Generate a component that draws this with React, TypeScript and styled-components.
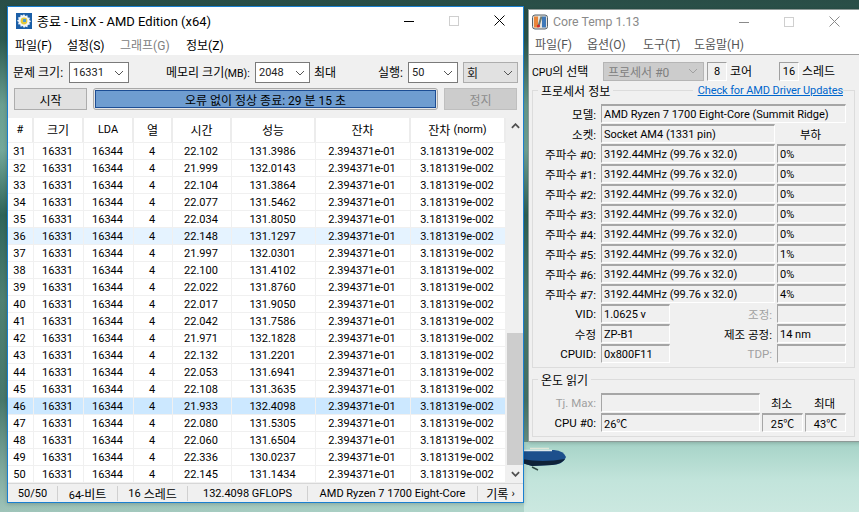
import styled, { createGlobalStyle } from "styled-components";

const GlobalStyle = createGlobalStyle`
  * { box-sizing: border-box; }
  html, body { margin: 0; padding: 0; height: 100%; overflow: hidden; }
  body {
    font-family: Roboto, "Noto Sans CJK KR", sans-serif;
    font-size: 11px;
    color: #000;
  }
`;

const Desktop = styled.div`
  position: relative;
  width: 859px;
  height: 512px;
  overflow: hidden;
  background:
    linear-gradient(180deg, #a6d3c7 0%, #c2e4db 55%, #cbe8e0 100%) 524px 442px / 335px 70px no-repeat,
    linear-gradient(90deg, rgba(150, 195, 183, 0) 0%, rgba(176, 214, 203, 0.9) 100%) 0 503px / 524px 9px no-repeat,
    linear-gradient(
      180deg,
      #294e47 0px,
      #2c5a50 40px,
      #6a9f90 105px,
      #74a899 150px,
      #2f6458 215px,
      #4f8072 300px,
      #47776a 400px,
      #7fa99d 470px,
      #9fc4b9 512px
    );
`;

const Boat = styled.svg`
  position: absolute;
  left: 522px;
  top: 444px;
`;

const Window = styled.div<{ $x: number; $y: number; $w: number; $h: number; $border: string }>`
  position: absolute;
  left: ${(p) => p.$x}px;
  top: ${(p) => p.$y}px;
  width: ${(p) => p.$w}px;
  height: ${(p) => p.$h}px;
  border: 1px solid ${(p) => p.$border};
  background: #f0f0f0;
  display: flex;
  flex-direction: column;
  box-shadow: 0 1px 4px rgba(0, 0, 0, 0.2);
`;

const TitleBar = styled.div<{ $h: number; $pad: number; $size: number; $dim?: boolean }>`
  height: ${(p) => p.$h}px;
  background: #fff;
  display: flex;
  align-items: center;
  padding-left: ${(p) => p.$pad}px;
  gap: 5px;
  font-size: ${(p) => p.$size}px;
  color: ${(p) => (p.$dim ? "#8a8a8a" : "#000")};
`;

const TitleText = styled.span`
  flex: 1;
  white-space: nowrap;
`;

const Controls = styled.div<{ $color: string; $right: number }>`
  display: flex;
  align-items: center;
  gap: 35px;
  margin-right: ${(p) => p.$right}px;
  color: ${(p) => p.$color};
  svg { display: block; }
`;

const MenuBar = styled.div<{ $h: number; $pad: number; $line?: boolean }>`
  height: ${(p) => p.$h}px;
  background: #fff;
  display: flex;
  align-items: center;
  padding-left: ${(p) => p.$pad}px;
  font-size: 12px;
  color: ${(p) => (p.$line ? "#555" : "#000")};
  border-bottom: ${(p) => (p.$line ? "1px solid #a0a0a0" : "none")};
`;

const MenuItem = styled.span<{ $w: number; $off?: boolean }>`
  width: ${(p) => p.$w}px;
  white-space: nowrap;
  color: ${(p) => (p.$off ? "#808080" : "inherit")};
`;

const ToolRow = styled.div`
  height: 21px;
  margin-top: 7px;
  display: flex;
  align-items: center;
  padding-left: 5px;
`;

const ToolLabel = styled.span<{ $w: number; $ml?: number }>`
  width: ${(p) => p.$w}px;
  margin-left: ${(p) => p.$ml ?? 0}px;
  padding-bottom: 2px;
  white-space: nowrap;
  font-size: 12px;
`;

const SmallLatin = styled.span`
  font-size: 10.5px;
`;

const Select = styled.div<{ $w: number; $ml?: number; $off?: boolean }>`
  width: ${(p) => p.$w}px;
  height: 21px;
  margin-left: ${(p) => p.$ml ?? 0}px;
  flex: none;
  display: flex;
  align-items: center;
  justify-content: space-between;
  padding: 0 4px 0 3px;
  font-size: 11px;
  background: ${(p) => (p.$off ? "#e1e1e1" : "#fff")};
  border: 1px solid ${(p) => (p.$off ? "#adadad" : "#7a7a7a")};
  color: #222;
`;

const ActionRow = styled.div`
  height: 22px;
  margin-top: 5px;
  display: flex;
  padding-left: 6px;
  gap: 6px;
`;

const ActionButton = styled.div<{ $off?: boolean }>`
  width: 73px;
  display: flex;
  align-items: center;
  justify-content: center;
  font-size: 12px;
  background: ${(p) => (p.$off ? "#cccccc" : "#e1e1e1")};
  border: 1px solid ${(p) => (p.$off ? "#bfbfbf" : "#adadad")};
  color: ${(p) => (p.$off ? "#8c8c8c" : "#000")};
`;

const ProgressOuter = styled.div`
  width: 345px;
  padding: 1px;
  border: 1px solid #a8a8a8;
  border-radius: 3px;
  background: #e6e6e6;
  display: flex;
`;

const ProgressBar = styled.div`
  flex: 1;
  display: flex;
  align-items: center;
  justify-content: center;
  font-size: 12px;
  background: #6f9dd0;
  border: 1px solid #1c4d94;
`;

const TableArea = styled.div`
  height: 365px;
  margin-top: 8px;
  display: flex;
`;

const Table = styled.div`
  width: 498px;
  background: #fff;
`;

const Columns = "26px 50px 50px 39px 59px 84px 95px 95px";

const HeaderRow = styled.div`
  display: grid;
  grid-template-columns: ${Columns};
  height: 25px;
  border-bottom: 1px solid #f0f0f0;
`;

const HeaderCell = styled.div`
  display: flex;
  align-items: center;
  justify-content: center;
  gap: 3px;
  font-size: 11px;
  border-right: 2px solid #ececec;
  padding-bottom: 1px;
`;

const DataRow = styled.div<{ $tint?: string }>`
  display: grid;
  grid-template-columns: ${Columns};
  height: 17px;
  background: ${(p) => p.$tint ?? "#fff"};
  border-bottom: 1px solid #f0f0f0;
`;

const DataCell = styled.div`
  display: flex;
  align-items: center;
  justify-content: center;
  padding-right: 2px;
  font-size: 11px;
  border-right: 1px solid #f0f0f0;
`;

const Ko = styled.span`
  font-size: 12px;
`;

const ScrollBar = styled.div`
  width: 16px;
  margin-left: 1px;
  background: #f0f0f0;
  display: flex;
  flex-direction: column;
  align-items: center;
  justify-content: space-between;
  padding: 5px 0 6px;
`;

const ScrollThumbWrap = styled.div`
  flex: 1;
  width: 100%;
  display: flex;
  flex-direction: column;
  justify-content: flex-end;
  padding: 0 0 6px;
`;

const ScrollThumb = styled.div`
  height: 132px;
  background: #cdcdcd;
`;

const StatusBar = styled.div`
  height: 19px;
  border-top: 1px solid #d7d7d7;
  display: flex;
  align-items: center;
`;

const StatusCell = styled.div<{ $w: number; $last?: boolean }>`
  width: ${(p) => p.$w}px;
  height: 15px;
  display: flex;
  align-items: center;
  justify-content: center;
  gap: 3px;
  font-size: 11px;
  white-space: nowrap;
  border-right: ${(p) => (p.$last ? "none" : "1px solid #d0d0d0")};
`;

const CoreBody = styled.div`
  flex: 1;
  padding: 6px 0 0 3px;
`;

const CpuRow = styled.div`
  height: 20px;
  display: flex;
  align-items: center;
  font-size: 12px;
`;

const CpuText = styled.span<{ $w: number }>`
  width: ${(p) => p.$w}px;
  padding-bottom: 2px;
  white-space: nowrap;
  flex: none;
`;

const Group = styled.div<{ $h: number; $top: number }>`
  position: relative;
  width: 323px;
  height: ${(p) => p.$h}px;
  margin-top: ${(p) => p.$top}px;
  border: 1px solid #dcdcdc;
  padding-top: 13px;
`;

const GroupTitle = styled.span`
  position: absolute;
  left: 5px;
  top: -9px;
  padding: 0 3px;
  background: #f0f0f0;
  font-size: 12px;
  white-space: nowrap;
`;

const DriverLink = styled.span`
  position: absolute;
  right: 11px;
  top: -7px;
  padding-left: 5px;
  background: #f0f0f0;
  color: #0066cc;
  text-decoration: underline;
  font-size: 11px;
  letter-spacing: -0.1px;
  white-space: nowrap;
`;

const InfoRow = styled.div`
  height: 20px;
  display: flex;
  align-items: stretch;
  padding-bottom: 1px;
`;

const InfoLabel = styled.div<{ $w: number; $off?: boolean; $center?: boolean }>`
  width: ${(p) => p.$w}px;
  flex: none;
  display: flex;
  align-items: center;
  justify-content: ${(p) => (p.$center ? "center" : "flex-end")};
  padding-right: ${(p) => (p.$center ? 0 : 5)}px;
  font-size: 11.5px;
  white-space: nowrap;
  color: ${(p) => (p.$off ? "#a0a0a0" : "#000")};
`;

const Field = styled.div<{ $w: number; $gap?: number; $center?: boolean }>`
  width: ${(p) => p.$w}px;
  flex: none;
  margin-left: ${(p) => p.$gap ?? 0}px;
  display: flex;
  align-items: center;
  justify-content: ${(p) => (p.$center ? "center" : "flex-start")};
  padding-left: ${(p) => (p.$center ? 0 : 2)}px;
  font-size: 11px;
  white-space: nowrap;
  border-style: solid;
  border-width: 1px;
  border-top: 2px solid #a6a6a6;
  border-left-color: #a6a6a6;
  border-right-color: #fff;
  border-bottom-color: #fff;
`;

const CoreSelect = styled.div`
  width: 101px;
  height: 19px;
  flex: none;
  display: flex;
  align-items: center;
  justify-content: space-between;
  padding: 0 5px 0 4px;
  background: #cccccc;
  border: 1px solid #b5b5b5;
  color: #808080;
`;

const CountBox = styled.div<{ $ml: number; $w: number }>`
  width: ${(p) => p.$w}px;
  height: 19px;
  margin-left: ${(p) => p.$ml}px;
  flex: none;
  display: flex;
  align-items: center;
  justify-content: center;
  font-size: 11px;
  border: 1px solid #fff;
  border-top-color: #a0a0a0;
  border-left-color: #a0a0a0;
  margin-right: 3px;
`;

const rows: [number, string, string][] = [
  [31, "22.102", "131.3986"],
  [32, "21.999", "132.0143"],
  [33, "22.104", "131.3864"],
  [34, "22.077", "131.5462"],
  [35, "22.034", "131.8050"],
  [36, "22.148", "131.1297"],
  [37, "21.997", "132.0301"],
  [38, "22.100", "131.4102"],
  [39, "22.022", "131.8760"],
  [40, "22.017", "131.9050"],
  [41, "22.042", "131.7586"],
  [42, "21.971", "132.1828"],
  [43, "22.132", "131.2201"],
  [44, "22.053", "131.6941"],
  [45, "22.108", "131.3635"],
  [46, "21.933", "132.4098"],
  [47, "22.080", "131.5305"],
  [48, "22.060", "131.6504"],
  [49, "22.336", "130.0237"],
  [50, "22.145", "131.1434"],
];

const loads = ["0%", "0%", "0%", "0%", "0%", "1%", "0%", "4%"];

const tintFor = (n: number) => (n === 36 ? "#e5f3ff" : n === 46 ? "#cce8ff" : undefined);

function Chevron({ color = "#555", up = false, size = 10 }: { color?: string; up?: boolean; size?: number }) {
  return (
    <svg width={size} height={6} viewBox="0 0 10 6" fill="none">
      <path d={up ? "M1 5 L5 1 L9 5" : "M1 1 L5 5 L9 1"} stroke={color} strokeWidth={up || size < 10 ? 2 : 1} />
    </svg>
  );
}

function WindowButtons({ color, right }: { color: string; right: number }) {
  return (
    <Controls $color={color} $right={right}>
      <svg width="10" height="10" viewBox="0 0 10 10">
        <path d="M0 5.5H10" stroke="currentColor" strokeWidth="1" />
      </svg>
      <svg width="10" height="10" viewBox="0 0 10 10">
        <rect x="0.5" y="0.5" width="9" height="9" fill="none" stroke="#cfcfcf" />
      </svg>
      <svg width="11" height="11" viewBox="0 0 11 11">
        <path d="M0.5 0.5L10.5 10.5M10.5 0.5L0.5 10.5" stroke="currentColor" strokeWidth="1" />
      </svg>
    </Controls>
  );
}

function LinxIcon() {
  return (
    <svg width="16" height="16" viewBox="0 0 16 16">
      <rect width="16" height="16" fill="#1b5fa8" />
      <path
        d="M8 1l1.2 2 2.2-.8.3 2.3 2.3.3-.8 2.2 2 1.2-2 1.2.8 2.2-2.3.3-.3 2.3-2.2-.8L8 15l-1.2-2-2.2.8-.3-2.3-2.3-.3.8-2.2-2-1.2 2-1.2-.8-2.2 2.3-.3.3-2.3 2.2.8z"
        fill="#f2f5f8"
      />
      <circle cx="8" cy="8" r="3.4" fill="#e3c93c" />
      <rect x="7" y="6" width="3" height="3" fill="#4d9ad0" />
    </svg>
  );
}

function CoreTempIcon() {
  return (
    <svg width="16" height="16" viewBox="0 0 16 16">
      <rect x="0.5" y="1" width="15" height="14" rx="2.5" fill="#e8e4dc" stroke="#55606a" />
      <rect x="2" y="2.5" width="4" height="11" fill="#e8853a" />
      <rect x="10" y="2.5" width="4" height="11" fill="#3f78b8" />
      <path d="M9.5 2.5L6.5 12" stroke="#6a7a70" strokeWidth="2" />
      <circle cx="6.5" cy="12" r="1.6" fill="#d02a2a" />
    </svg>
  );
}

function App() {
  return (
    <Desktop>
      <GlobalStyle />
      <Boat width="46" height="30" viewBox="0 0 46 30">
        <path d="M8 4.5 H27" stroke="#e0e6d8" strokeWidth="1.5" />
        <path d="M0 6 H32 Q42 7 44 13 Q42 20 30 21 L10 22 L0 19 Z" fill="#1d4f8c" />
        <path d="M0 6.5 H30" stroke="#dfe8ea" strokeWidth="1.5" />
        <path d="M0 15 Q20 19 43 15 Q40 20 30 21 L10 22 L0 19 Z" fill="#0f2238" />
        <path d="M10 23 L16 26" stroke="#2f4a44" strokeWidth="1.5" />
      </Boat>

      <Window $x={7} $y={6} $w={517} $h={497} $border="#1a7fd0">
        <TitleBar $h={27} $pad={8} $size={13}>
          <LinxIcon />
          <TitleText>종료 - LinX - AMD Edition (x64)</TitleText>
          <WindowButtons color="#000" right={18} />
        </TitleBar>
        <MenuBar $h={21} $pad={7}>
          <MenuItem $w={52}>파일(F)</MenuItem>
          <MenuItem $w={53}>설정(S)</MenuItem>
          <MenuItem $w={66} $off>
            그래프(G)
          </MenuItem>
          <MenuItem $w={50}>정보(Z)</MenuItem>
        </MenuBar>

        <ToolRow>
          <ToolLabel $w={56}>문제 크기:</ToolLabel>
          <Select $w={60}>
            16331 <Chevron />
          </Select>
          <ToolLabel $w={89} $ml={37}>
            메모리 크기<SmallLatin>(MB):</SmallLatin>
          </ToolLabel>
          <Select $w={55}>
            2048 <Chevron />
          </Select>
          <ToolLabel $w={30} $ml={4}>
            최대
          </ToolLabel>
          <ToolLabel $w={30} $ml={34}>
            실행:
          </ToolLabel>
          <Select $w={50}>
            50 <Chevron />
          </Select>
          <Select $w={55} $ml={5} $off>
            <Ko>회</Ko> <Chevron />
          </Select>
        </ToolRow>

        <ActionRow>
          <ActionButton>시작</ActionButton>
          <ProgressOuter>
            <ProgressBar>오류 없이 정상 종료: 29 분 15 초</ProgressBar>
          </ProgressOuter>
          <ActionButton $off>정지</ActionButton>
        </ActionRow>

        <TableArea>
          <Table>
            <HeaderRow>
              <HeaderCell>#</HeaderCell>
              <HeaderCell>
                <Ko>크기</Ko>
              </HeaderCell>
              <HeaderCell>LDA</HeaderCell>
              <HeaderCell>
                <Ko>열</Ko>
              </HeaderCell>
              <HeaderCell>
                <Ko>시간</Ko>
              </HeaderCell>
              <HeaderCell>
                <Ko>성능</Ko>
              </HeaderCell>
              <HeaderCell>
                <Ko>잔차</Ko>
              </HeaderCell>
              <HeaderCell>
                <Ko>잔차</Ko> (norm)
              </HeaderCell>
            </HeaderRow>
            {rows.map(([n, time, perf]) => (
              <DataRow key={n} $tint={tintFor(n)}>
                <DataCell>{n}</DataCell>
                <DataCell>16331</DataCell>
                <DataCell>16344</DataCell>
                <DataCell>4</DataCell>
                <DataCell>{time}</DataCell>
                <DataCell>{perf}</DataCell>
                <DataCell>2.394371e-01</DataCell>
                <DataCell>3.181319e-002</DataCell>
              </DataRow>
            ))}
          </Table>
          <ScrollBar>
            <Chevron up color="#505050" size={9} />
            <ScrollThumbWrap>
              <ScrollThumb />
            </ScrollThumbWrap>
            <Chevron color="#505050" size={9} />
          </ScrollBar>
        </TableArea>

        <StatusBar>
          <StatusCell $w={50}>50/50</StatusCell>
          <StatusCell $w={60}>
            <span>
              64-<Ko>비트</Ko>
            </span>
          </StatusCell>
          <StatusCell $w={70}>
            16 <Ko>스레드</Ko>
          </StatusCell>
          <StatusCell $w={120}>132.4098 GFLOPS</StatusCell>
          <StatusCell $w={170}>AMD Ryzen 7 1700 Eight-Core</StatusCell>
          <StatusCell $w={45} $last>
            <Ko>기록</Ko> ›
          </StatusCell>
        </StatusBar>
      </Window>

      <Window $x={528} $y={9} $w={335} $h={433} $border="#8e9a97">
        <TitleBar $h={23} $pad={3} $size={12.3} $dim>
          <CoreTempIcon />
          <TitleText>Core Temp 1.13</TitleText>
          <WindowButtons color="#8a8a8a" right={22} />
        </TitleBar>
        <MenuBar $h={22} $pad={6} $line>
          <MenuItem $w={52}>파일(F)</MenuItem>
          <MenuItem $w={56}>옵션(O)</MenuItem>
          <MenuItem $w={51}>도구(T)</MenuItem>
          <MenuItem $w={60}>도움말(H)</MenuItem>
        </MenuBar>
        <CoreBody>
          <CpuRow>
            <CpuText $w={71}>
              <SmallLatin>CPU</SmallLatin>의 선택
            </CpuText>
            <CoreSelect>
              프로세서 #0 <Chevron color="#a0a0a0" />
            </CoreSelect>
            <CountBox $ml={3} $w={20}>
              8
            </CountBox>
            <CpuText $w={49}>코어</CpuText>
            <CountBox $ml={0} $w={20}>
              16
            </CountBox>
            <CpuText $w={40}>스레드</CpuText>
          </CpuRow>

          <Group $h={278} $top={9}>
            <GroupTitle>프로세서 정보</GroupTitle>
            <DriverLink>Check for AMD Driver Updates</DriverLink>
            <InfoRow>
              <InfoLabel $w={68}>모델:</InfoLabel>
              <Field $w={245}>AMD Ryzen 7 1700 Eight-Core (Summit Ridge)</Field>
            </InfoRow>
            <InfoRow>
              <InfoLabel $w={68}>소켓:</InfoLabel>
              <Field $w={174}>Socket AM4 (1331 pin)</Field>
              <InfoLabel $w={71} $center>
                부하
              </InfoLabel>
            </InfoRow>
            {loads.map((load, i) => (
              <InfoRow key={i}>
                <InfoLabel $w={68}>주파수 #{i}:</InfoLabel>
                <Field $w={174}>3192.44MHz (99.76 x 32.0)</Field>
                <Field $w={69} $gap={2}>
                  {load}
                </Field>
              </InfoRow>
            ))}
            <InfoRow>
              <InfoLabel $w={68}>VID:</InfoLabel>
              <Field $w={69}>1.0625 v</Field>
              <InfoLabel $w={107} $off>
                조정:
              </InfoLabel>
              <Field $w={69}></Field>
            </InfoRow>
            <InfoRow>
              <InfoLabel $w={68}>수정</InfoLabel>
              <Field $w={69}>ZP-B1</Field>
              <InfoLabel $w={107}>제조 공정:</InfoLabel>
              <Field $w={69}>14 nm</Field>
            </InfoRow>
            <InfoRow>
              <InfoLabel $w={68}>CPUID:</InfoLabel>
              <Field $w={69}>0x800F11</Field>
              <InfoLabel $w={107} $off>
                TDP:
              </InfoLabel>
              <Field $w={69}></Field>
            </InfoRow>
          </Group>

          <Group $h={58} $top={11}>
            <GroupTitle>온도 읽기</GroupTitle>
            <InfoRow>
              <InfoLabel $w={68} $off>
                Tj. Max:
              </InfoLabel>
              <Field $w={159}></Field>
              <InfoLabel $w={43} $center>
                최소
              </InfoLabel>
              <InfoLabel $w={43} $center>
                최대
              </InfoLabel>
            </InfoRow>
            <InfoRow>
              <InfoLabel $w={68}>CPU #0:</InfoLabel>
              <Field $w={159}>26℃</Field>
              <Field $w={41} $gap={2} $center>
                25℃
              </Field>
              <Field $w={41} $gap={2} $center>
                43℃
              </Field>
            </InfoRow>
          </Group>
        </CoreBody>
      </Window>
    </Desktop>
  );
}

export default App;
